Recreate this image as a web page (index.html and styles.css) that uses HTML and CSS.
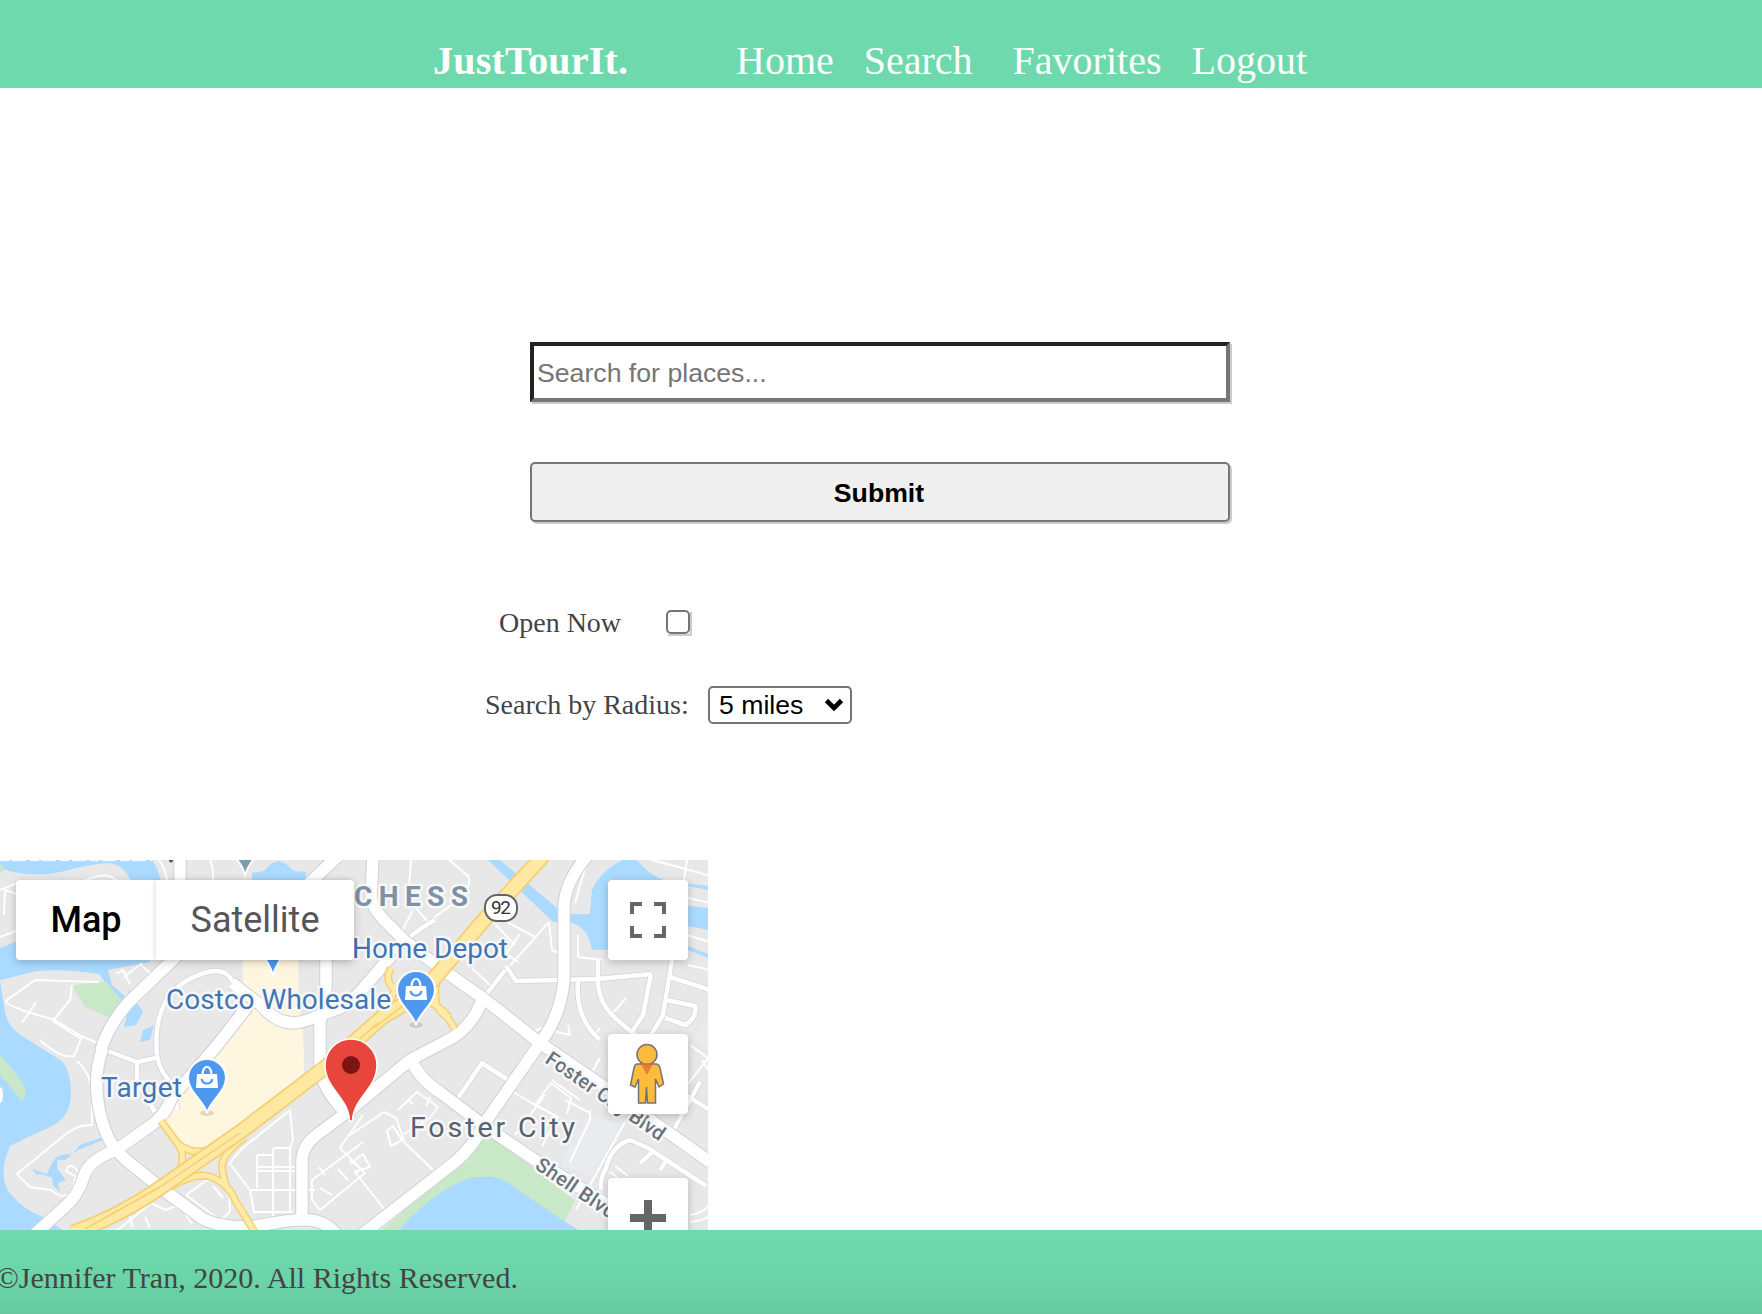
FILE: index.html
```html
<!DOCTYPE html>
<html lang="en">
<head>
<meta charset="utf-8">
<title>JustTourIt.</title>
<link rel="stylesheet" href="styles.css">
</head>
<body>
<header class="topbar">
  <strong class="brand">JustTourIt.</strong>
  <nav class="nav">
    <a>Home</a>
    <a>Search</a>
    <a class="nav-favorites">Favorites</a>
    <a>Logout</a>
  </nav>
</header>

<main class="page">
  <form class="search">
    <input class="search-input" type="text" placeholder="Search for places...">
    <button class="search-submit" type="button">Submit</button>
    <div class="row row-open">
      <label for="open">Open Now</label>
      <span class="check-wrap"><input class="check" id="open" type="checkbox"></span>
    </div>
    <div class="row row-radius">
      <span>Search by Radius:</span>
      <div class="select"><span>5 miles</span>
        <svg width="20" height="14" viewBox="0 0 20 14"><path d="M2.5 2.5 10 10 17.5 2.5" fill="none" stroke="#000" stroke-width="4.6"/></svg>
      </div>
    </div>
  </form>

  <section class="map">
    <svg class="map-canvas" width="708" height="370" viewBox="0 860 708 370">
      <defs>
        <g id="shop">
          <ellipse cx="0" cy="35" rx="7" ry="3" fill="#000" opacity=".12"/>
          <path d="M0 35C-3 23-19 14-19 0A19 19 0 0 1 19 0C19 14 3 23 0 35Z" fill="#4f98ef" stroke="#fff" stroke-width="2"/>
          <path d="M-10-4H10L11 10H-11Z" fill="#fff"/>
          <path d="M-4.500-3C-4.500-14 4.500-14 4.500-3" fill="none" stroke="#fff" stroke-width="2.200"/>
          <path d="M-5.500 1C-4 7 4 7 5.500 1" fill="none" stroke="#4f98ef" stroke-width="2.200"/>
        </g>
        <g id="major">
          <path d="M35 1234 70 1202Q79 1192 84 1176T116 1150L153 1124Q166 1114 172 1097L188 1079L215 1048L248 1006"/>
          <path d="M103 1048C94 1070 94 1105 107 1135Q112 1147 125 1159L158 1186 203 1219Q230 1231 262 1225T310 1220 338 1236"/>
          <path d="M101 1050Q108 1026 128 1003L158 974 178 955"/>
          <path d="M300 892 338 856M180 858V885"/>
          <path d="M232 983 262 1006Q282 1030 308 1020T340 1008 360 992L392 955"/>
          <path d="M326 945V985Q325 1005 320 1022V1068Q322 1088 345 1112"/>
          <path d="M302 1222V1162Q302 1145 318 1134L350 1110 410 1060 452 1038Q473 1025 482 1000"/>
          <path d="M373 858 371 896Q372 908 384 920L405 941 440 968 483 998 540 1043 600 1084 710 1162"/>
          <path d="M588 855Q566 880 564 905V980Q561 1012 545 1036L484 1124Q474 1146 455 1162L355 1240"/>
          <path d="M410 1058Q420 1080 441 1093L486 1127 535 1160 610 1206 646 1232"/>
        </g>
        <g id="mid">
          <path d="M157 1055Q152 1000 188 980T234 984"/>
          <path d="M392 955 406 940Q420 928 435 920"/>
          <path d="M108 1051 137 1062 156 1058"/>
          <path d="M137 1062V1082L155 1112M157 1055Q160 1074 174 1085L177 1110"/>
          <path d="M458 1098 482 1063 508 1080M506 966 516 981 598 979 651 974"/>
          <path d="M578 982Q575 1018 600 1040M598 960V985Q600 1004 615 1018L635 1035M651 974 643 1015 632 1032M672 960 663 1015 650 1037M670 977 710 990M666 1000 695 1006Q698 1015 686 1025L665 1018"/>
          <path d="M482 1000 505 970"/>
          <path d="M601 1190Q600 1178 606 1168 612 1145 630 1140L648 1148 706 1186M655 1150 640 1163M668 1158 660 1170"/>
          <path d="M700 1082 673 1131M653 1075 710 1110"/>
        </g>
        <g id="minor">
          <path d="M100 1044 81 1036 55 1020Q0 1005 7 1000L35 980 99 982M36 1002 22 1023M72 985 70 1000 53 1021 81 1039 74 1056Q61 1059 40 1040"/>
          <path d="M116 974 123 970 130 984M124 977 142 963M141 965 150 973"/>
          <path d="M77 1061Q92 1075 92 1095V1125Q76 1124 61 1138L17 1174 30 1187 51 1190Q65 1202 72 1190L76 1177 66 1171Q70 1160 78 1172"/>
          <path d="M411 860 408 899 428 922 443 911Q475 890 468 876L447 858M413 910 400 935M428 922 408 942"/>
          <path d="M158 858Q166 870 167 880M210 858Q214 870 213 882M0 890 15 884M4 915 5 890 17 894M0 937 18 930M82 882Q105 870 116 880"/>
          <path d="M503 920 535 937M549 922 552 950 560 954M549 922 488 990M493 922 515 945M472 968 490 985M578 935V957L602 960M575 903 586 865M520 934 502 960M496 946 518 962"/>
          <path d="M652 860Q680 867 710 876M687 860 684 880M684 897 710 903M687 935 710 942M688 965 710 970M613 1013 626 998M595 1035 600 1028M530 1035 540 1028 570 1035 568 1025"/>
          <path d="M231 1165 250 1190 254 1212H293M229 1165Q235 1155 244 1147L290 1110 293 1140 290 1148V1212M274 1148H290M257 1155H273M257 1167H295M257 1171H295M257 1155V1188M273 1148V1220M251 1190H315"/>
          <path d="M186 1195 207 1180Q222 1180 229 1193L230 1211 221 1221 186 1195M223 1198 213 1186M115 1232 151 1203 165 1210 180 1205 192 1224M145 1217 150 1228M132 1227 130 1215"/>
          <path d="M363 1115 340 1148 365 1173 320 1210 312 1200V1180L363 1142M319 1167 325 1175M338 1169 348 1180M320 1188 332 1195M350 1160 360 1168"/>
          <path d="M350 1135 384 1112 396 1118 405 1143 433 1170M350 1164 363 1154 370 1167 355 1172 385 1210M387 1131 393 1126 402 1140 391 1146ZM398 1110 417 1092 438 1107 430 1118 404 1134M407 1100 413 1104M430 1097 426 1106"/>
          <path d="M510 1090 535 1105 551 1083 571 1098 567 1114M535 1105 558 1117 542 1146M515 1135 545 1095M590 1113 565 1100M590 1110V1120L570 1162M552 1080 580 1100M600 1058 592 1072M625 1122 576 1210M690 1045 708 1058 688 1084M702 1060 710 1072"/>
          <path d="M615 1166 628 1176M618 1178 610 1172M690 1215Q708 1212 712 1200M690 1222Q712 1220 716 1208"/>
        </g>
        <g id="highway">
          <path d="M543 856 483 921 433 980Q408 1005 381 1017"/>
          <path d="M388 1012 327 1066 243 1130Q200 1160 160 1188T72 1233"/>
        </g>
        <g id="ramps">
          <path d="M161 1121 178 1144Q184 1152 182 1164T160 1186M178 1144Q195 1156 210 1149L243 1129"/>
          <path d="M170 1187Q198 1170 214 1178T235 1200L257 1236M245 1137Q221 1155 222 1167T228 1190"/>
          <path d="M391 968Q384 980 394 989M383 1018Q395 990 397 985M437 978Q432 1005 442 1013T454 1029M423 1000Q438 1004 449 1017"/>
        </g>
      </defs>
      <rect y="860" width="708" height="370" fill="#e8e8e8"/>
      <g fill="#aadaff">
        <path d="M0 860H152Q158 868 161 882H131Q124 864 108 863 90 864 65 871 30 879 0 868Z"/>
        <path d="M0 948 20 940H95L150 955V962L108 970 112 985 127 998 129 990 143 1012 136 1025 124 1027 127 1015 118 996 105 982 99 974Q50 967 28 973T0 980Z"/>
        <path d="M143 1030 154 1025 150 1040 140 1042Z"/>
        <path d="M0 980 5 1012Q8 1028 25 1038T60 1060Q71 1068 71 1095 70 1118 50 1127T10 1146Q-3 1176 10 1193T45 1218L62 1230H0Z"/>
        <path d="M252 873 264 871Q276 856 286 864L294 871 306 872 305 880H252Z"/>
        <path d="M488 860H500L556 907 562 914H590L592 890Q600 871 623 860H637Q650 877 670 882L708 886V890L688 886V906L708 908V930L688 926V946L708 954V958L688 950H592Q588 925 568 922L553 922Z"/>
        <path d="M32 1169 47 1174 52 1163Q58 1152 72 1155L80 1145 103 1137V1140L78 1150 65 1160 57 1160 58 1170 66 1180 58 1183 60 1192 53 1185 52 1178 42 1174 37 1175Z"/>
      </g>
      <path d="M488 1135Q450 1170 382 1230H560L575 1201 508 1148Z" fill="#c9e8c8"/>
      <path d="M400 1230Q405 1220 432 1199 450 1185 467 1179 495 1172 510 1184L550 1212 580 1231Z" fill="#aadaff"/>
      <path d="M72 986 106 981 112 990 125 1003 115 1020 85 1007ZM0 1055Q24 1080 26 1093L22 1101 0 1075ZM0 865H3V872H0Z" fill="#c9e8c8"/>
      <ellipse cx="0" cy="1095" rx="3" ry="8" fill="#fff"/>
      <path d="M242 955H298L299 1005Q304 1025 304 1073L260 1115 210 1147Q187 1150 180 1142L162 1118 180 1088 245 1012Z" fill="#fff6e0"/>
      <path d="M560 1165 590 1113 620 1125 592 1176Z M695 1040 708 1018V1050Z" fill="#e8ecef"/>

      <use href="#minor" class="road minor"/>
      <use href="#mid" class="road mid-edge"/>
      <use href="#mid" class="road mid"/>
      <use href="#major" class="road major-edge"/>
      <use href="#major" class="road major"/>
      <use href="#ramps" class="road ramp-edge"/>
      <use href="#ramps" class="road ramp"/>
      <use href="#highway" class="road highway-edge"/>
      <use href="#highway" class="road highway"/>
      <path class="road highway-line" d="M378 1023 327 1068M240 1133 160 1187 85 1229M430 985 375 1027"/>

      <path d="M235 858H255Q249 864 245 875 242 864 235 858Z" fill="#7b9dad" stroke="#fff" stroke-width="2"/>
      <path d="M262 955H284Q277 963 273 975 269 963 262 955Z" fill="#4f98ef" stroke="#fff" stroke-width="2"/>
      <path d="M0 860.500H152" stroke="#f4f8fb" stroke-width="1.500" stroke-dasharray="9 3 14 4"/>
      <circle cx="171" cy="860.500" r="2" fill="#556"/>
      <use href="#shop" x="416" y="990"/>
      <use href="#shop" x="207" y="1078"/>

      <g class="labels">
        <text x="354" y="906" class="label-area" textLength="114">CHESS</text>
        <text x="352" y="958" class="label-shop" textLength="156">Home Depot</text>
        <text x="166" y="1009" class="label-shop" textLength="225">Costco Wholesale</text>
        <text x="101" y="1097" class="label-shop" textLength="81">Target</text>
        <text x="410" y="1137" class="label-city" textLength="165">Foster City</text>
        <text transform="translate(544 1062) rotate(34.500)" class="label-road" textLength="140">Foster City Blvd</text>
        <text transform="translate(534 1168) rotate(34)" class="label-road" textLength="92">Shell Blvd</text>
      </g>
      <rect x="485" y="895" width="32" height="26" rx="12" fill="#fff" stroke="#626567" stroke-width="2"/>
      <text x="491" y="914" class="label-shield" textLength="20">92</text>
      <path d="M349.500 1121C349 1098 325 1089 325 1065A26 26 0 0 1 377 1065C377 1089 353 1098 352.500 1121Z" fill="#e8453c" stroke="#fff" stroke-width="1.500"/>
      <circle cx="351" cy="1065" r="9" fill="#7d1414"/>
    </svg>

    <div class="map-types">
      <div class="map-type map-type-on">Map</div>
      <div class="map-type map-type-off">Satellite</div>
    </div>
    <div class="map-tools">
      <div class="tool"><svg width="36" height="36"><path d="M2 12V2H12M24 2H34V12M34 24V34H24M12 34H2V24" fill="none" stroke="#666" stroke-width="4"/></svg></div>
      <div class="tool tool-person"><svg width="36" height="62" viewBox="0 0 36 62">
        <path d="M8 21H27Q30 21 31 25L34.500 41 30 44 26.500 36V60H18.500L17.500 44 16.500 60H9.500V36L6 44 1.500 42 5 25Q6 21 8 21Z" fill="#fbbc3d" stroke="#737373" stroke-width="1.500"/>
        <path d="M12 21H24L18 32Z" fill="#e0803a"/>
        <circle cx="18" cy="11.500" r="10" fill="#fbbc3d" stroke="#737373" stroke-width="1.500"/>
        <path d="M11 21H24" stroke="#e06a30" stroke-width="1.500"/>
      </svg></div>
      <div class="tool tool-zoom"><svg width="36" height="36"><path d="M18 0V36M0 18H36" stroke="#666" stroke-width="8"/></svg></div>
    </div>
  </section>
</main>

<footer class="footer"><span>©Jennifer Tran, 2020. All Rights Reserved.</span></footer>
</body>
</html>
```
FILE: styles.css
```css
* { box-sizing: border-box; }
body {
  margin: 0;
  width: 1762px;
  height: 1314px;
  overflow: hidden;
  display: flex;
  flex-direction: column;
  background: #fff;
  color: #444;
  font-family: "Liberation Serif", "Times New Roman", serif;
}
.topbar {
  flex: none;
  height: 88px;
  padding: 38px 0 0 433px;
  display: flex;
  background: #6ed9ad;
  color: #fff;
  font-size: 40px;
  line-height: 46px;
}
.brand { width: 303px; letter-spacing: .2px; }
.nav { display: flex; gap: 30px; }
.nav-favorites { margin-left: 10px; }

.page { flex: none; height: 1142px; }
.search {
  height: 772px;
  padding: 254px 0 0 530px;
  display: flex;
  flex-direction: column;
  align-items: flex-start;
}
.search-input, .search-submit {
  width: 700px;
  height: 60px;
  font: 26.67px "Liberation Sans", Arial, sans-serif;
  box-shadow: 2px 2px #ccc;
}
.search-input {
  padding: 2px 2px 0 3px;
  border: 4px solid;
  border-color: #222 #767676 #767676 #222;
  background: #fff;
  outline: 0;
}
.search-input::placeholder { color: #757575; }
.search-submit {
  margin-top: 60px;
  padding: 2px 2px 0 0;
  border: 2px solid #767676;
  border-radius: 5px;
  background: #efefef;
  color: #000;
  font-weight: bold;
}
.row { display: flex; align-items: center; font-size: 28px; white-space: nowrap; }
.row-open { height: 40px; margin: 81px 0 0 -31px; gap: 45px; }
.row-open label { width: 122px; }
.check-wrap {
  width: 24px;
  height: 24px;
  margin-top: -2px;
  display: flex;
  box-shadow: 2px 2px #ccc;
}
.check {
  appearance: none;
  width: 24px;
  height: 24px;
  margin: 0;
  border: 2px solid #767676;
  border-radius: 5px;
  background: #fff;
}
.row-radius { height: 38px; margin: 43px 0 0 -45px; }
.row-radius > span { width: 223px; }
.select {
  width: 144px;
  height: 38px;
  padding: 0 6px 0 9px;
  display: flex;
  align-items: center;
  justify-content: space-between;
  border: 2px solid #767676;
  border-radius: 5px;
  color: #000;
  font: 26.67px "Liberation Sans", Arial, sans-serif;
}

.map { position: relative; width: 708px; height: 370px; overflow: hidden; font-family: Roboto, sans-serif; }
.map-canvas { display: block; }
.road { fill: none; stroke: #fff; stroke-linejoin: round; }
.minor { stroke-width: 2; }
.mid-edge { stroke: #d3d4dc; stroke-width: 6; }
.mid { stroke-width: 4.500; }
.major-edge { stroke: #cfd0d8; stroke-width: 13.500; }
.major { stroke-width: 11.500; }
.ramp-edge { stroke: #f4cf73; stroke-width: 8; }
.ramp { stroke: #ffeaa8; stroke-width: 5; }
.highway-edge { stroke: #f4cf73; stroke-width: 16; }
.highway { stroke: #ffe8a1; stroke-width: 12.500; }
.highway-line { stroke: #f4cf73; stroke-width: 1.500; }
.labels text { stroke: #f7f7f7; stroke-width: 5px; paint-order: stroke; stroke-linejoin: round; }
.label-area { fill: #7f91a7; font-size: 28px; font-weight: 700; }
.label-shop { fill: #4275b3; font-size: 28px; }
.label-city { fill: #56626d; font-size: 28.500px; }
.label-road { fill: #66727b; font-size: 20px; font-weight: 500; }
.label-shield { fill: #333; font-size: 19px; }

.map-types {
  position: absolute;
  left: 16px;
  top: 20px;
  display: flex;
  height: 80px;
  border-radius: 4px;
  box-shadow: 0 2px 8px rgba(0, 0, 0, .22);
  font-size: 36px;
  line-height: 80px;
}
.map-type { background: #fff; text-align: center; }
.map-type-on { width: 140px; color: #000; font-weight: 500; border-radius: 4px 0 0 4px; }
.map-type-off { width: 198px; color: #565656; border-radius: 0 4px 4px 0; box-shadow: -2px 0 4px rgba(0, 0, 0, .1); }
.map-tools { position: absolute; left: 608px; top: 20px; }
.tool {
  width: 80px;
  height: 80px;
  display: flex;
  align-items: center;
  justify-content: center;
  background: #fff;
  border-radius: 4px;
  box-shadow: 0 2px 8px rgba(0, 0, 0, .22);
}
.tool-person { margin-top: 74px; padding-right: 2px; }
.tool-zoom { margin-top: 64px; }

.footer {
  flex: none;
  height: 84px;
  padding-top: 30px;
  background: linear-gradient(#6ed9ad, #6bd4a8 60%, #66c99f);
  font-size: 30px;
  line-height: 36px;
}
.footer span { margin-left: -4px; white-space: nowrap; letter-spacing: .02px; }
```
